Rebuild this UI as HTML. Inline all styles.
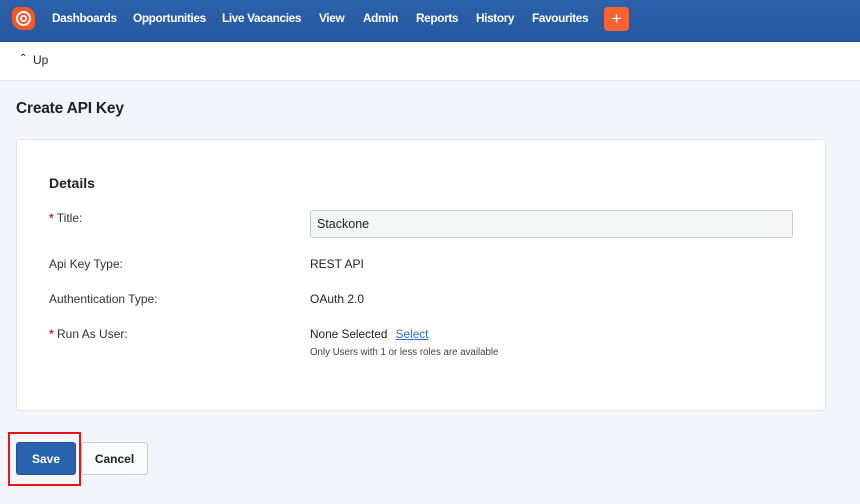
<!DOCTYPE html>
<html><head><style>
*{box-sizing:border-box;margin:0;padding:0}
body{width:860px;height:504px;background:#f2f5f9;font-family:"Liberation Sans",Arial,sans-serif;position:relative;overflow:hidden;color:#222}
.nav{position:absolute;left:0;top:0;width:860px;height:42px;background:linear-gradient(#2b62ab,#2658a0);border-bottom:1px solid #1d4a8a}
.nav a{position:absolute;top:11px;color:#fff;font-weight:bold;font-size:11.8px;letter-spacing:-0.35px}
.logo{position:absolute;left:12px;top:7px;width:23px;height:23px;background:#f05a28;border-radius:6px 10px 6px 10px}
.plus{position:absolute;left:604px;top:7px;width:25px;height:24px;background:#f96332;border-radius:4px;color:#fff;text-align:center;font-size:17px;line-height:23px}
.up{position:absolute;left:0;top:42px;width:860px;height:39px;background:#fff;border-bottom:1px solid #e3e7ec;font-size:12px}
h1{position:absolute;left:16px;top:100px;font-size:15.5px;font-weight:bold;color:#222;letter-spacing:-0.2px}
.card{position:absolute;left:16px;top:139px;width:810px;height:272px;background:#fff;border:1px solid #e0e4e9;border-radius:3px}
.t{position:absolute;font-size:12px;color:#333}
.req{color:#c0282d;font-weight:bold}
.inp{position:absolute;left:310px;top:210px;width:483px;height:28px;background:#f4f6f8;border:1px solid #c6ccd3;border-radius:3px;font-size:12.5px;padding:6px 6px}
.btn{position:absolute;top:442px;height:33px;border-radius:3px;font-size:12px;font-weight:bold;text-align:center;line-height:33px}
</style></head><body>
<div class="nav">
<div class="logo"><svg width="23" height="23" viewBox="0 0 23 23"><circle cx="11.5" cy="11.5" r="6.5" fill="none" stroke="#fff" stroke-width="2"/><circle cx="11.5" cy="11.5" r="2.6" fill="none" stroke="#fff" stroke-width="1.8"/></svg></div>
<a style="left:52px">Dashboards</a><a style="left:133px">Opportunities</a><a style="left:222px">Live Vacancies</a><a style="left:319px">View</a><a style="left:363px">Admin</a><a style="left:416px">Reports</a><a style="left:476px">History</a><a style="left:532px">Favourites</a>
<div class="plus">+</div>
</div>
<div class="up"><span style="position:absolute;left:19px;top:11px;font-size:10px">⌃</span><span style="position:absolute;left:33px;top:11px">Up</span></div>
<h1>Create API Key</h1>
<div class="card"></div>
<div class="t" style="left:49px;top:175px;font-size:14px;font-weight:bold;color:#222">Details</div>
<div class="t" style="left:49px;top:211px"><span class="req">*</span> Title:</div>
<div class="inp">Stackone</div>
<div class="t" style="left:49px;top:257px">Api Key Type:</div>
<div class="t" style="left:310px;top:257px;color:#222">REST API</div>
<div class="t" style="left:49px;top:292px">Authentication Type:</div>
<div class="t" style="left:310px;top:292px;color:#222">OAuth 2.0</div>
<div class="t" style="left:49px;top:327px"><span class="req">*</span> Run As User:</div>
<div class="t" style="left:310px;top:327px;color:#222;font-size:11.8px">None Selected <span style="color:#2a6fdb;text-decoration:underline;margin-left:5px">Select</span></div>
<div class="t" style="left:310px;top:347px;font-size:9.7px;color:#444">Only Users with 1 or less roles are available</div>
<div class="btn" style="left:81px;width:67px;background:#fafbfc;border:1px solid #c9ced4;color:#222">Cancel</div>
<div style="position:absolute;left:8px;top:432px;width:73px;height:54px;border:2px solid #e8141b"></div>
<div class="btn" style="left:16px;width:60px;background:#2a63ad;color:#fff;border:1px solid #21569a">Save</div>
</body></html>
